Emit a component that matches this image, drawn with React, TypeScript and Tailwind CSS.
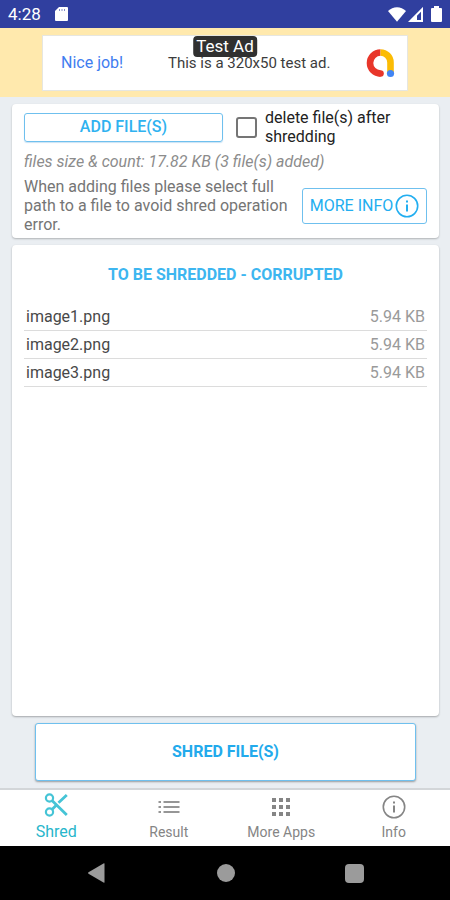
import React, { useState } from "react";

const files = [
  { name: "image1.png", size: "5.94 KB" },
  { name: "image2.png", size: "5.94 KB" },
  { name: "image3.png", size: "5.94 KB" },
];

function StatusBar() {
  return (
    <header className="flex h-7 shrink-0 items-center justify-between bg-[#303f9f] px-2 text-white">
      <div className="flex items-center gap-[14px]">
        <span className="w-8 text-[17px] leading-5">4:28</span>
        <svg width="15" height="16" viewBox="0 0 15 16" fill="currentColor" aria-hidden="true">
          <path d="M5 1h8a1 1 0 0 1 1 1v12a1 1 0 0 1-1 1H2a1 1 0 0 1-1-1V5z" />
          <path d="M5.500 3v2M8 3v2M10.500 3v2" stroke="#303f9f" strokeWidth="0.6" />
        </svg>
      </div>
      <div className="flex items-center gap-[2px]">
        <svg width="18" height="15" viewBox="0 0 18 15" fill="currentColor" aria-hidden="true">
          <path d="M0 4C2.600 1.500 5.600.2 9 .2S15.400 1.500 18 4L9 14.800z" />
        </svg>
        <svg width="15" height="15" viewBox="0 0 15 15" fill="none" stroke="currentColor" aria-hidden="true">
          <path d="M14 2.300v11.700H2.300z" strokeWidth="2" />
          <path d="M9 8v6H3z" fill="currentColor" stroke="none" />
        </svg>
        <svg className="ml-[6px]" width="11" height="16" viewBox="0 0 11 16" fill="currentColor" aria-hidden="true">
          <path d="M3 0h5v2h2a1 1 0 0 1 1 1v12a1 1 0 0 1-1 1H1a1 1 0 0 1-1-1V3a1 1 0 0 1 1-1h2z" />
        </svg>
      </div>
    </header>
  );
}

function AdBanner() {
  return (
    <section className="flex h-[69px] shrink-0 justify-center bg-[#ffe9ad] pt-[7px]">
      <div className="relative flex h-14 w-[366px] items-center border border-[#e6e6e0] bg-white pr-3 pl-[18px]">
        <a href="#ad" className="w-[107px] text-base leading-5 text-[#3f7df0]">
          Nice job!
        </a>
        <span className="flex-1 text-[15px] leading-5 whitespace-nowrap text-[#3c3c3c]">
          This is a 320x50 test ad.
        </span>
        <svg width="30" height="30" viewBox="0 0 30 30" fill="none" aria-hidden="true">
          <path d="M15.500 4.500a10.500 10.500 0 0 0 0 21" stroke="#e8362a" strokeWidth="6.600" />
          <circle cx="15.500" cy="25.500" r="3.300" fill="#e8362a" />
          <path d="M15.500 4.500A10 10 0 0 1 25.500 14.500v10" stroke="#fbbc04" strokeWidth="6.600" />
          <circle cx="25.500" cy="25.500" r="3.600" fill="#4285f4" />
        </svg>
        <span className="absolute top-0 left-1/2 -translate-x-1/2 rounded-sm bg-[#303030] px-[3px] text-[17px] leading-[21px] whitespace-nowrap text-white">
          Test Ad
        </span>
      </div>
    </section>
  );
}

function InfoIcon() {
  return (
    <svg width="24" height="24" viewBox="0 0 24 24" fill="none" stroke="currentColor" strokeWidth="1.600" aria-hidden="true">
      <circle cx="12" cy="12" r="10.700" />
      <path d="M12 10.500v7M12 6.500v2" strokeWidth="2" />
    </svg>
  );
}

function OptionsCard() {
  const [erase, setErase] = useState(false);
  return (
    <section className="rounded bg-white px-3 py-1 shadow-[0_1px_2px_rgba(0,0,0,0.25)]">
      <div className="flex items-center">
        <button className="h-[29px] w-[199px] rounded-[3px] border border-[#6fc0ee] text-base leading-5 font-medium text-[#2fb2f0] shadow-[0_1px_1px_rgba(80,160,220,0.3)]">
          ADD FILE(S)
        </button>
        <input
          id="erase"
          type="checkbox"
          checked={erase}
          onChange={(e) => setErase(e.target.checked)}
          className="ml-[13px] size-[21px] shrink-0 appearance-none rounded-[3px] border-2 border-[#757575] checked:bg-[#29abe9]"
        />
        <label htmlFor="erase" className="ml-2 flex-1 text-base leading-[19px] text-[#222]">
          delete file(s) after shredding
        </label>
      </div>
      <p className="mt-[5px] text-base leading-[22px] text-[#8c8c8c] italic">
        files size &amp; count: 17.82 KB (3 file(s) added)
      </p>
      <div className="mt-1 flex items-center justify-between">
        <p className="w-[272px] text-base leading-[19px] text-[#757575]">
          When adding files please select full path to a file to avoid shred operation error.
        </p>
        <button className="flex h-9 w-[125px] shrink-0 items-center justify-center gap-[2px] rounded-[3px] border border-[#6fc0ee] text-base leading-5 whitespace-nowrap text-[#22aef0]">
          MORE INFO
          <InfoIcon />
        </button>
      </div>
    </section>
  );
}

function FilesCard() {
  return (
    <section className="flex-1 rounded bg-white px-3 pt-5 shadow-[0_1px_2px_rgba(0,0,0,0.3)]">
      <h1 className="text-center text-base leading-5 font-bold text-[#3db6f0]">TO BE SHREDDED - CORRUPTED</h1>
      <table className="mt-[18px] w-full text-base leading-[27px]">
        <tbody>
          {files.map((f) => (
            <tr key={f.name} className="border-b border-[#dcdcdc]">
              <td className="pl-[2px] text-[#484848]">{f.name}</td>
              <td className="pr-[2px] text-right text-[#9a9a9a]">{f.size}</td>
            </tr>
          ))}
        </tbody>
      </table>
    </section>
  );
}

function BottomNav() {
  return (
    <nav className="grid h-[58px] shrink-0 grid-cols-4 border-t-2 border-[#d3d6d9] bg-white text-sm leading-4 text-[#858585]">
      <a href="#shred" className="flex flex-col items-center pt-[3px] text-base leading-4 text-[#27b6cb]">
        <svg width="24" height="24" viewBox="0 0 24 24" fill="none" stroke="#45c4d6" strokeWidth="2.200" aria-hidden="true">
          <circle cx="5.500" cy="5" r="3.600" />
          <circle cx="5.500" cy="19" r="3.600" />
          <path d="M8 7.500 22.800 22M8 16.500l4.500-4.500M14.500 9.800 22.800 2" strokeWidth="2.800" />
        </svg>
        <span className="mt-[7px]">Shred</span>
      </a>
      <a href="#result" className="flex flex-col items-center pt-[5px]">
        <svg width="24" height="24" viewBox="0 0 24 24" stroke="#969696" strokeWidth="2.200" aria-hidden="true">
          <path d="M1.500 7h2.500M1.500 12h2.500M1.500 17h2.500M6.500 7h16M6.500 12h16M6.500 17h16" />
        </svg>
        <span className="mt-[5px]">Result</span>
      </a>
      <a href="#apps" className="flex flex-col items-center pt-[5px]">
        <svg width="24" height="24" viewBox="0 0 24 24" fill="none" stroke="#858585" strokeWidth="4" aria-hidden="true">
          <path d="M3 5h4m3 0h4m3 0h4M3 12h4m3 0h4m3 0h4M3 19h4m3 0h4m3 0h4" />
        </svg>
        <span className="mt-[5px]">More Apps</span>
      </a>
      <a href="#info" className="flex flex-col items-center pt-[5px]">
        <InfoIcon />
        <span className="mt-[5px]">Info</span>
      </a>
    </nav>
  );
}

function SystemBar() {
  return (
    <footer className="flex h-[54px] shrink-0 items-center justify-center gap-[110px] bg-black text-[#9b9b9b]">
      <button aria-label="Back">
        <svg width="20" height="20" viewBox="0 0 20 20" fill="currentColor" aria-hidden="true">
          <path d="M17.500.500v19a1 1 0 0 1-1 0L1.500 10.800a1 1 0 0 1 0-1.600L16.500.500a1 1 0 0 1 1 0z" />
        </svg>
      </button>
      <button aria-label="Home" className="size-[18px] rounded-full bg-[#9b9b9b]" />
      <button aria-label="Recent apps" className="size-[19px] rounded-sm bg-[#9b9b9b]" />
    </footer>
  );
}

export default function App() {
  return (
    <div className="flex min-h-screen flex-col bg-[#eaeef2] font-['Roboto',sans-serif]">
      <StatusBar />
      <AdBanner />
      <main className="flex flex-1 flex-col gap-[7px] pt-[7px] pr-[11px] pb-[7px] pl-3">
        <OptionsCard />
        <FilesCard />
        <button className="mx-[23px] h-[58px] shrink-0 rounded-[3px] border border-[#6fc0ee] bg-white text-base leading-5 font-bold text-[#22aaec] shadow-[0_1px_2px_rgba(0,0,0,0.35)]">
          SHRED FILE(S)
        </button>
      </main>
      <BottomNav />
      <SystemBar />
    </div>
  );
}
